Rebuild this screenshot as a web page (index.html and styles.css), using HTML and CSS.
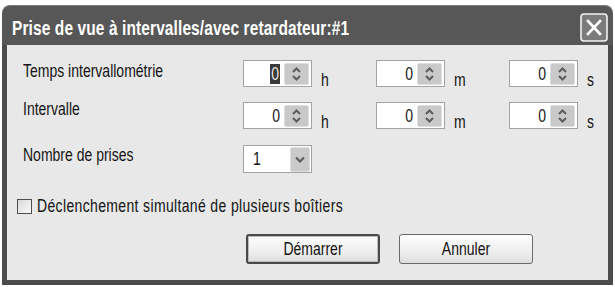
FILE: index.html
```html
<!DOCTYPE html>
<html lang="fr">
<head>
  <meta charset="UTF-8">
  <title>Prise de vue à intervalles</title>
  <link rel="stylesheet" href="styles.css">
</head>
<body>

<div class="window">
  <div class="titlebar">
    <span class="title tx">Prise de vue à intervalles/avec retardateur:#1</span>
    <div class="close">
      <svg width="28" height="29" viewBox="0 0 28 29">
        <rect x="1" y="1" width="26" height="27" rx="3" fill="#7b7b7b" stroke="#f2f2f2" stroke-width="1.6"/>
        <path d="M8 8 L20 21 M20 8 L8 21" stroke="#fff" stroke-width="2.6" stroke-linecap="square"/>
      </svg>
    </div>
  </div>

  <div class="client">
    <!-- Temps intervallometrie -->
    <div class="row row-first">
      <span class="label tx lbl-1">Temps intervallométrie</span>
      <div class="group">
        <div class="spin">
          <span class="val"><span class="sel tx">0</span></span>
          <div class="arrows">
            <svg width="23" height="20" viewBox="0 0 23 20"><path d="M8 8 L11.5 4.5 L15 8 M8 12 L11.5 15.5 L15 12" fill="none" stroke="#5c5c5c" stroke-width="2"/></svg>
          </div>
        </div>
        <span class="unit tx">h</span>
      </div>
      <div class="group">
        <div class="spin">
          <span class="val"><span class="tx">0</span></span>
          <div class="arrows">
            <svg width="23" height="20" viewBox="0 0 23 20"><path d="M8 8 L11.5 4.5 L15 8 M8 12 L11.5 15.5 L15 12" fill="none" stroke="#5c5c5c" stroke-width="2"/></svg>
          </div>
        </div>
        <span class="unit tx">m</span>
      </div>
      <div class="group">
        <div class="spin">
          <span class="val"><span class="tx">0</span></span>
          <div class="arrows">
            <svg width="23" height="20" viewBox="0 0 23 20"><path d="M8 8 L11.5 4.5 L15 8 M8 12 L11.5 15.5 L15 12" fill="none" stroke="#5c5c5c" stroke-width="2"/></svg>
          </div>
        </div>
        <span class="unit tx">s</span>
      </div>
    </div>

    <!-- Intervalle -->
    <div class="row row-second">
      <span class="label tx lbl-2">Intervalle</span>
      <div class="group">
        <div class="spin">
          <span class="val"><span class="tx">0</span></span>
          <div class="arrows">
            <svg width="23" height="20" viewBox="0 0 23 20"><path d="M8 8 L11.5 4.5 L15 8 M8 12 L11.5 15.5 L15 12" fill="none" stroke="#5c5c5c" stroke-width="2"/></svg>
          </div>
        </div>
        <span class="unit tx">h</span>
      </div>
      <div class="group">
        <div class="spin">
          <span class="val"><span class="tx">0</span></span>
          <div class="arrows">
            <svg width="23" height="20" viewBox="0 0 23 20"><path d="M8 8 L11.5 4.5 L15 8 M8 12 L11.5 15.5 L15 12" fill="none" stroke="#5c5c5c" stroke-width="2"/></svg>
          </div>
        </div>
        <span class="unit tx">m</span>
      </div>
      <div class="group">
        <div class="spin">
          <span class="val"><span class="tx">0</span></span>
          <div class="arrows">
            <svg width="23" height="20" viewBox="0 0 23 20"><path d="M8 8 L11.5 4.5 L15 8 M8 12 L11.5 15.5 L15 12" fill="none" stroke="#5c5c5c" stroke-width="2"/></svg>
          </div>
        </div>
        <span class="unit tx">s</span>
      </div>
    </div>

    <!-- Nombre de prises -->
    <div class="row row-third">
      <span class="label tx lbl-3">Nombre de prises</span>
      <div class="combo">
        <span class="combo-val tx">1</span>
        <div class="drop">
          <svg width="18" height="23" viewBox="0 0 18 23"><path d="M5 9.5 L9 13.5 L13 9.5" fill="none" stroke="#5c5c5c" stroke-width="2.2"/></svg>
        </div>
      </div>
    </div>

    <label class="check-row">
      <span class="checkbox"></span>
      <span class="check-text tx">Déclenchement simultané de plusieurs boîtiers</span>
    </label>

    <div class="buttons">
      <button class="btn btn-default"><span class="tx">Démarrer</span></button>
      <button class="btn"><span class="tx">Annuler</span></button>
    </div>
  </div>
</div>

</body>
</html>
```

FILE: styles.css
```css
* { box-sizing: border-box; }

body {
  margin: 0;
  background: #fff;
  font-family: 'Liberation Sans', Arial, sans-serif;
  font-size: 14px;
  color: #141414;
}

/* text in the shot is stretched vertically */
.tx {
  display: inline-block;
  transform: scaleY(1.25);
}

.window {
  width: 611px;
  margin: 5px 0 0 2px;
}

.titlebar {
  height: 40px;
  background: #575757;
  border-radius: 8px 8px 0 0;
  border-top: 1px solid #7a7a7a;
  display: flex;
  justify-content: space-between;
  align-items: flex-start;
}

.title {
  color: #fff;
  font-weight: bold;
  font-size: 15.5px;
  line-height: 18px;
  margin: 14px 0 0 10px;
  letter-spacing: 0.1px;
}

.close {
  margin: 7px 5px 0 0;
  height: 29px;
}

.client {
  height: 240px;
  background: #e8e8e8;
  border: 5px solid #4b4b4b;
  border-top: none;
  padding: 15px 0 0 16px;
}

.row {
  display: flex;
  align-items: flex-start;
  height: 28px;
}
.row-second { margin-top: 14px; }
.row-third { margin-top: 15px; }

.label {
  flex: 0 0 220px;
  line-height: 16px;
}
.lbl-1 { margin-top: 3px; }
.lbl-2 { margin-top: -1px; }
.lbl-3 { margin-top: 2px; }

.group {
  flex: 0 0 133px;
  display: flex;
  align-items: flex-start;
}
.group:last-child { flex-basis: auto; }

.spin {
  flex: 0 0 69px;
  height: 27px;
  background: #fff;
  border: 1px solid #a3a3a3;
  display: flex;
  align-items: flex-start;
}

.val {
  flex: 1;
  text-align: right;
  padding: 5px 4px 0 0;
  line-height: 16px;
}

.sel {
  background: #3a3a3a;
  color: #e6e6e6;
  padding: 0 1px;
}

.arrows {
  width: 25px;
  height: 22px;
  margin: 2px 2px 0 0;
  background: #c9c9c9;
  border: 1px solid #dedede;
  border-radius: 2px;
}
.arrows svg { display: block; }

.unit {
  margin: 12px 0 0 9px;
  line-height: 16px;
}

.combo {
  flex: 0 0 69px;
  height: 28px;
  background: #fff;
  border: 1px solid #a3a3a3;
  display: flex;
  justify-content: space-between;
  align-items: flex-start;
}
.combo-val {
  margin: 5px 0 0 9px;
  line-height: 16px;
}
.drop {
  width: 20px;
  height: 25px;
  margin: 1px 1px 0 0;
  background: #cacaca;
  border: 1px solid #dedede;
  border-radius: 2px;
}
.drop svg { display: block; }

.check-row {
  display: flex;
  align-items: center;
  margin: 25px 0 0 -6px;
  height: 16px;
}
.checkbox {
  width: 15px;
  height: 15px;
  border: 1px solid #4e4e4e;
  background: linear-gradient(135deg, #d9d9d9, #fafafa);
  margin-right: 5px;
}
.check-text {
  letter-spacing: 0.35px;
}

.buttons {
  display: flex;
  gap: 19px;
  margin: 20px 0 0 223px;
}

.btn {
  width: 134px;
  height: 30px;
  border: 1px solid #6a6a6a;
  border-radius: 3px;
  background: linear-gradient(#fdfdfd, #ececec 70%, #dcdcdc);
  font-family: inherit;
  font-size: 14px;
  color: #141414;
  padding: 0;
}
.btn-default {
  border: 2px solid #4a4a4a;
  box-shadow: inset 0 0 0 1px #bdbdbd;
}
```
